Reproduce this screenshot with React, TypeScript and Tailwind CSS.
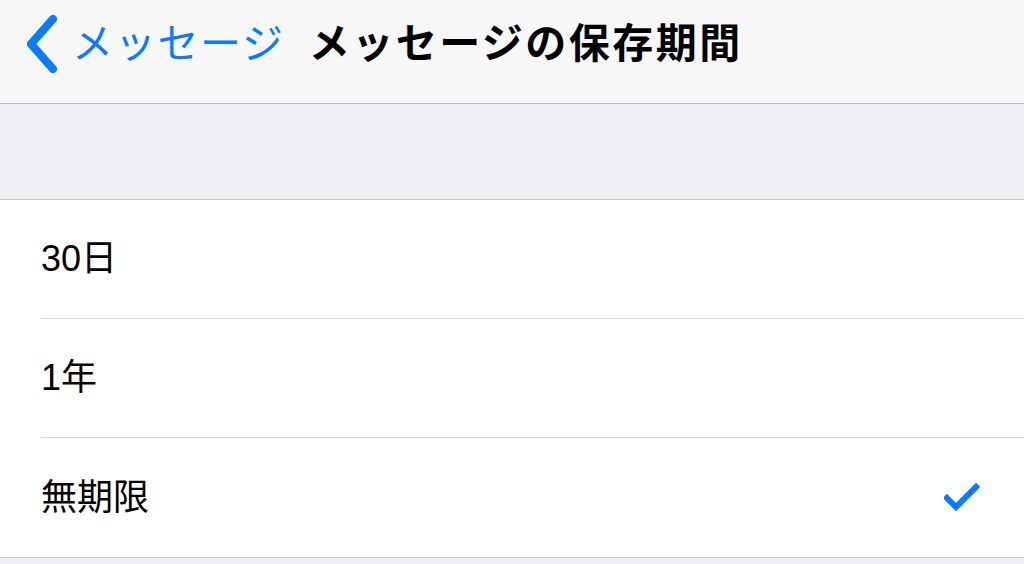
const rows = [
  { label: "30日", checked: false },
  { label: "1年", checked: false },
  { label: "無期限", checked: true },
];

const font = { fontFamily: '"Liberation Sans", "Noto Sans CJK JP", sans-serif' };

export default function App() {
  return (
    <div className="flex h-[564px] w-[1024px] flex-col overflow-hidden bg-[#efeff4]" style={font}>
      {/* ナビゲーションバー */}
      <header className="flex h-[104px] shrink-0 items-start border-b border-[#bdbcc2] bg-[#f7f7f8] pt-[14px]">
        <div className="flex items-center pl-[24px] text-[#0a7aff]">
          <svg width="36" height="60" viewBox="0 0 36 60" fill="none">
            <path d="M29 5 L7 30 L29 55" stroke="#0a7aff" strokeWidth="8" strokeLinecap="round" strokeLinejoin="round" />
          </svg>
          <span className="ml-[12px] text-[41px] leading-[60px] tracking-[1.7px]">メッセージ</span>
        </div>
        <h1 className="ml-[24px] text-[41px] font-bold leading-[60px] text-black tracking-[2.5px]">
          メッセージの保存期間
        </h1>
      </header>

      {/* 余白 */}
      <div className="h-[95px] shrink-0" />

      {/* 選択肢 */}
      <div className="border-y border-[#c8c7cc] bg-white">
        {rows.map((r, i) => (
          <div key={r.label} className="pl-[41px]">
            <div
              className={
                "flex h-[119px] items-center justify-between pr-[44px] " +
                (i < rows.length - 1 ? "border-b border-[#d9d9dd]" : "")
              }
            >
              <span className="text-[36px] text-black">{r.label}</span>
              {r.checked && (
                <svg width="36" height="30" viewBox="0 0 36 30" fill="none">
                  <path d="M3 15 L12 24 L32 4" stroke="#0a7aff" strokeWidth="6" strokeLinecap="square" strokeLinejoin="miter" />
                </svg>
              )}
            </div>
          </div>
        ))}
      </div>
    </div>
  );
}
